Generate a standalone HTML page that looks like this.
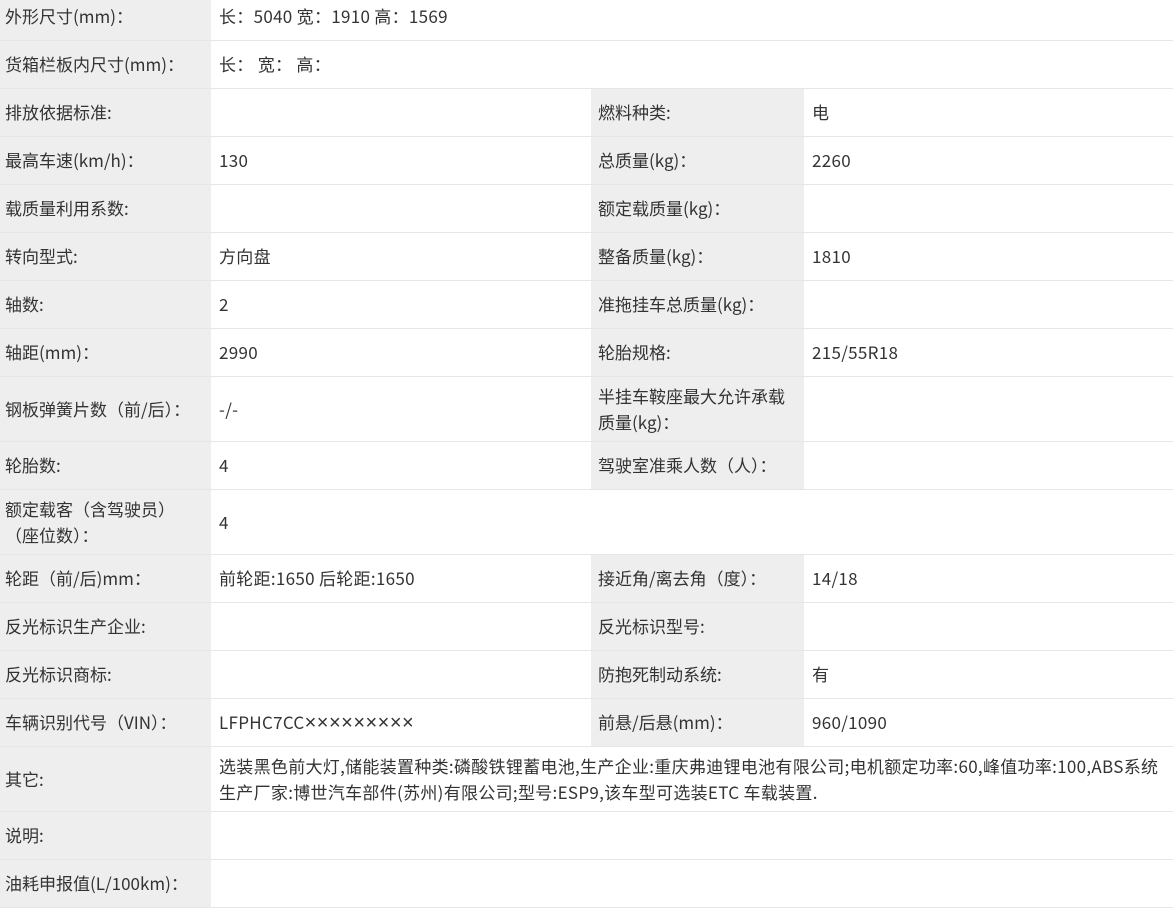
<!DOCTYPE html>
<html><head><meta charset="utf-8"><style>
body{margin:0;background:#fff;font-family:"Noto Sans CJK SC","Liberation Sans",sans-serif;font-size:17px;color:#333;letter-spacing:0.3px;}
table{border-collapse:collapse;table-layout:fixed;width:1173px;}
td{padding:0 0 0 8px;border-bottom:1px solid #e6e6e6;vertical-align:middle;line-height:26px;overflow:hidden;white-space:nowrap;}
td.l{background:#eeeeee;padding-left:5px;letter-spacing:0;}
td.w{white-space:normal;line-height:26px;}
.x{font-family:"Liberation Sans",sans-serif;font-size:20px;letter-spacing:0.5px;}
</style></head><body>
<table>
<col style="width:211px"><col style="width:380px"><col style="width:213px"><col style="width:369px">
<tr style="height:40px"><td class="l" style="vertical-align:top;padding-top:3px">外形尺寸(mm)：</td><td colspan="3" style="vertical-align:top;padding-top:3px">长：5040 宽：1910 高：1569</td></tr>
<tr style="height:48px"><td class="l">货箱栏板内尺寸(mm)：</td><td colspan="3">长： 宽： 高：</td></tr>
<tr style="height:48px"><td class="l">排放依据标准:</td><td></td><td class="l" style="padding-left:7px">燃料种类:</td><td>电</td></tr>
<tr style="height:48px"><td class="l">最高车速(km/h)：</td><td>130</td><td class="l" style="padding-left:7px">总质量(kg)：</td><td>2260</td></tr>
<tr style="height:48px"><td class="l">载质量利用系数:</td><td></td><td class="l" style="padding-left:7px">额定载质量(kg)：</td><td></td></tr>
<tr style="height:48px"><td class="l">转向型式:</td><td>方向盘</td><td class="l" style="padding-left:7px">整备质量(kg)：</td><td>1810</td></tr>
<tr style="height:48px"><td class="l">轴数:</td><td>2</td><td class="l" style="padding-left:7px">准拖挂车总质量(kg)：</td><td></td></tr>
<tr style="height:48px"><td class="l">轴距(mm)：</td><td>2990</td><td class="l" style="padding-left:7px">轮胎规格:</td><td>215/55R18</td></tr>
<tr style="height:65px"><td class="l">钢板弹簧片数（前/后）：</td><td>-/-</td><td class="l w" style="padding-left:7px">半挂车鞍座最大允许承载<br>质量(kg)：</td><td></td></tr>
<tr style="height:48px"><td class="l">轮胎数:</td><td>4</td><td class="l" style="padding-left:7px">驾驶室准乘人数（人）：</td><td></td></tr>
<tr style="height:65px"><td class="l w">额定载客（含驾驶员）<br>（座位数）：</td><td colspan="3">4</td></tr>
<tr style="height:48px"><td class="l">轮距（前/后)mm：</td><td>前轮距:1650 后轮距:1650</td><td class="l" style="padding-left:7px">接近角/离去角（度）：</td><td>14/18</td></tr>
<tr style="height:48px"><td class="l">反光标识生产企业:</td><td></td><td class="l" style="padding-left:7px">反光标识型号:</td><td></td></tr>
<tr style="height:48px"><td class="l">反光标识商标:</td><td></td><td class="l" style="padding-left:7px">防抱死制动系统:</td><td>有</td></tr>
<tr style="height:48px"><td class="l">车辆识别代号（VIN）：</td><td>LFPHC7CC<span class="x">×××××××××</span></td><td class="l" style="padding-left:7px">前悬/后悬(mm)：</td><td>960/1090</td></tr>
<tr style="height:65px"><td class="l">其它:</td><td colspan="3" class="w" style="white-space:nowrap">选装黑色前大灯,储能装置种类:磷酸铁锂蓄电池,生产企业:重庆弗迪锂电池有限公司;电机额定功率:60,峰值功率:100,ABS系统<br>生产厂家:博世汽车部件(苏州)有限公司;型号:ESP9,该车型可选装ETC 车载装置.</td></tr>
<tr style="height:48px"><td class="l">说明:</td><td colspan="3"></td></tr>
<tr style="height:48px"><td class="l">油耗申报值(L/100km)：</td><td colspan="3"></td></tr>
</table>
</body></html>
